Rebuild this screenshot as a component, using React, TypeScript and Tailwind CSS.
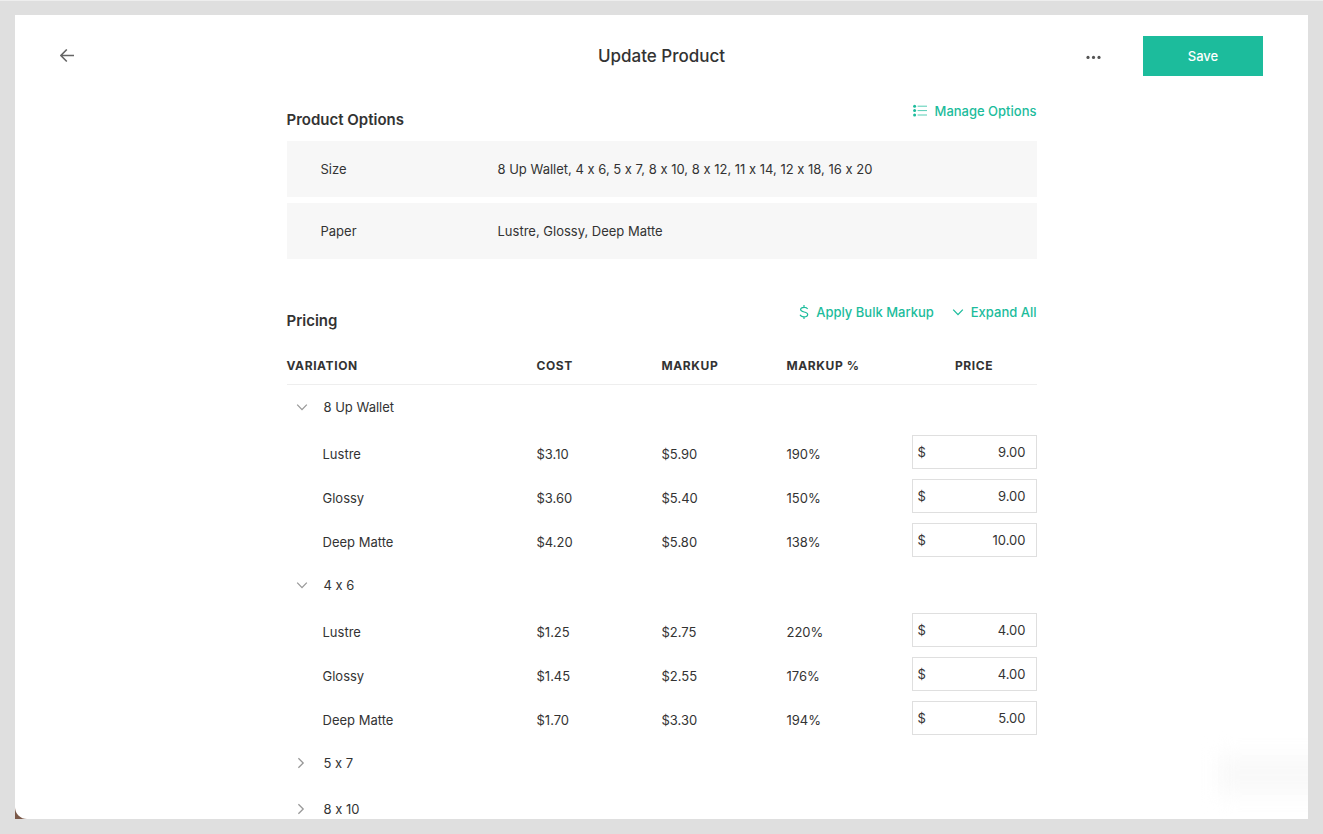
import { Fragment, useState } from 'react'

interface PriceRow {
  name: string
  cost: string
  markup: string
  percent: string
  price: string
}

interface Variation {
  name: string
  rows: PriceRow[]
}

const options = [
  { label: 'Size', value: '8 Up Wallet, 4 x 6, 5 x 7, 8 x 10, 8 x 12, 11 x 14, 12 x 18, 16 x 20' },
  { label: 'Paper', value: 'Lustre, Glossy, Deep Matte' },
]

const variations: Variation[] = [
  {
    name: '8 Up Wallet',
    rows: [
      { name: 'Lustre', cost: '$3.10', markup: '$5.90', percent: '190%', price: '9.00' },
      { name: 'Glossy', cost: '$3.60', markup: '$5.40', percent: '150%', price: '9.00' },
      { name: 'Deep Matte', cost: '$4.20', markup: '$5.80', percent: '138%', price: '10.00' },
    ],
  },
  {
    name: '4 x 6',
    rows: [
      { name: 'Lustre', cost: '$1.25', markup: '$2.75', percent: '220%', price: '4.00' },
      { name: 'Glossy', cost: '$1.45', markup: '$2.55', percent: '176%', price: '4.00' },
      { name: 'Deep Matte', cost: '$1.70', markup: '$3.30', percent: '194%', price: '5.00' },
    ],
  },
  { name: '5 x 7', rows: [] },
  { name: '8 x 10', rows: [] },
]

function ArrowLeftIcon() {
  return (
    <svg width="14" height="14" viewBox="0 0 14 14" fill="none" stroke="#666" strokeWidth="1.6">
      <path d="M14 6.5H1M6.8 0.5L0.9 6.5l5.9 6" />
    </svg>
  )
}

function DotsIcon() {
  return (
    <svg width="16" height="6" viewBox="0 0 16 6" fill="#555">
      <circle cx="2" cy="4.4" r="1.6" />
      <circle cx="7.5" cy="4.4" r="1.6" />
      <circle cx="13" cy="4.4" r="1.6" />
    </svg>
  )
}

function ListIcon() {
  return (
    <svg width="14" height="14" viewBox="0 0 14 14" fill="none">
      <g fill="#1cbc9c">
        <circle cx="1.6" cy="2.2" r="1.5" />
        <circle cx="1.6" cy="6.6" r="1.5" />
        <circle cx="1.6" cy="11" r="1.5" />
      </g>
      <path d="M4.6 2.2H14M4.6 6.6H14M4.6 11H14" stroke="#1cbc9c" strokeWidth="1" strokeOpacity="0.75" />
    </svg>
  )
}

function DollarIcon() {
  return (
    <svg width="10" height="14" viewBox="0 0 10 14" fill="none" stroke="#1cbc9c" strokeWidth="1.2">
      <path d="M8.6 4C8.2 2.9 6.9 2.3 5.1 2.3 3 2.3 1.6 3.1 1.6 4.6c0 3.3 7.1 1.5 7.1 4.8 0 1.5-1.5 2.4-3.7 2.4-2 0-3.4-.7-3.9-2M5 0v2.3M5 11.8V14" />
    </svg>
  )
}

function ChevronDown({ color }: { color: string }) {
  return (
    <svg width="12" height="12" viewBox="0 0 12 12" fill="none" stroke={color} strokeWidth="1.3">
      <path d="M1.2 3.6L6 8.6l4.8-5" />
    </svg>
  )
}

function ChevronRight({ color }: { color: string }) {
  return (
    <svg width="12" height="12" viewBox="0 0 12 12" fill="none" stroke={color} strokeWidth="1.3">
      <path d="M2.4 1.2L7.2 6l-4.8 4.8" />
    </svg>
  )
}

export default function App() {
  const [open, setOpen] = useState<string[]>(['8 Up Wallet', '4 x 6'])

  const toggle = (name: string) => {
    setOpen(open.includes(name) ? open.filter((n) => n !== name) : [...open, name])
  }

  return (
    <div className="h-screen border-t border-[#eeeeee] bg-[#dfdfdf] px-[15px] pt-[14px] pb-[15px] font-['Inter',sans-serif] text-[13px] leading-5 text-[#333] [font-variant-ligatures:no-contextual]">
      <div className="h-full bg-[#7a5848]">
        <div className="relative h-full overflow-hidden rounded-bl-[12px] bg-white">
          {/* Header */}
          <header className="grid grid-cols-3 items-center px-[45px] pt-[21px]">
            <button type="button" aria-label="Back" className="justify-self-start">
              <ArrowLeftIcon />
            </button>
            <h1 className="text-center text-[17px] font-medium">Update Product</h1>
            <div className="flex items-center justify-end gap-[41px]">
              <button type="button" aria-label="More actions">
                <DotsIcon />
              </button>
              <button type="button" className="h-10 w-[120px] bg-[#1cbc9c] font-medium text-white">
                Save
              </button>
            </div>
          </header>

          <main className="mx-auto max-w-[750px] pt-[25px]">
            {/* Product Options */}
            <section>
              <div className="mb-[9px] flex items-start justify-between">
                <h2 className="mt-[7px] text-[15px] leading-6 font-semibold">Product Options</h2>
                <a href="#options" className="flex items-center gap-2 font-medium text-[#1cbc9c]">
                  <ListIcon />
                  Manage Options
                </a>
              </div>
              <dl className="space-y-[6px]">
                {options.map((option) => (
                  <div key={option.label} className="flex h-14 items-center bg-[#f7f7f7] px-[34px]">
                    <dt className="w-[177px]">{option.label}</dt>
                    <dd>{option.value}</dd>
                  </div>
                ))}
              </dl>
            </section>

            {/* Pricing */}
            <section className="mt-[43px]">
              <div className="mb-4 flex items-start justify-between">
                <h2 className="mt-[7px] text-[15px] leading-6 font-semibold">Pricing</h2>
                <div className="flex gap-[18px] font-medium text-[#1cbc9c]">
                  <button type="button" className="flex items-center gap-[7px]">
                    <DollarIcon />
                    Apply Bulk Markup
                  </button>
                  <button
                    type="button"
                    className="flex items-center gap-[7px]"
                    onClick={() => setOpen(variations.map((v) => v.name))}
                  >
                    <ChevronDown color="#1cbc9c" />
                    Expand All
                  </button>
                </div>
              </div>

              <table className="w-full table-fixed border-collapse text-left">
                <thead>
                  <tr className="h-[35px] border-b border-[#eeeeee] text-xs tracking-wider uppercase">
                    <th className="w-1/3 font-bold">Variation</th>
                    <th className="font-bold">Cost</th>
                    <th className="font-bold">Markup</th>
                    <th className="font-bold">Markup %</th>
                    <th className="text-center font-bold">Price</th>
                  </tr>
                </thead>
                <tbody>
                  {variations.map((variation) => {
                    const isOpen = open.includes(variation.name)
                    return (
                      <Fragment key={variation.name}>
                        <tr className="h-[46px]">
                          <td colSpan={5}>
                            <button
                              type="button"
                              aria-expanded={isOpen}
                              onClick={() => toggle(variation.name)}
                              className="flex items-center gap-4 pl-[9px]"
                            >
                              {isOpen ? <ChevronDown color="#999" /> : <ChevronRight color="#999" />}
                              {variation.name}
                            </button>
                          </td>
                        </tr>
                        {isOpen &&
                          variation.rows.map((row) => (
                            <tr key={row.name} className="h-11">
                              <td className="pt-[3px] pl-9">{row.name}</td>
                              <td className="pt-[3px]">{row.cost}</td>
                              <td className="pt-[3px]">{row.markup}</td>
                              <td className="pt-[3px]">{row.percent}</td>
                              <td>
                                <label className="flex h-[34px] items-center border border-[#dfdfdf] pr-[10px] pl-[5px]">
                                  <span>$</span>
                                  <input
                                    type="text"
                                    aria-label={`${variation.name} ${row.name} price`}
                                    defaultValue={row.price}
                                    className="w-full min-w-0 text-right outline-none"
                                  />
                                </label>
                              </td>
                            </tr>
                          ))}
                      </Fragment>
                    )
                  })}
                </tbody>
              </table>
            </section>
          </main>

          {/* Faded chat launcher */}
          <div className="absolute -right-8 bottom-6 h-10 w-[122px] bg-[#f9f9f9] blur-[10px]" />
        </div>
      </div>
    </div>
  )
}
